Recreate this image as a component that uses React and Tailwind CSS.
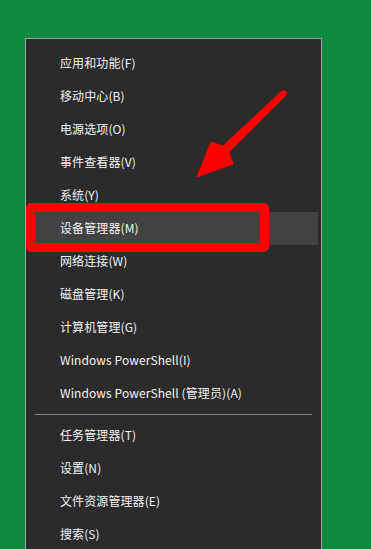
import React from "react";

const top = [
  "应用和功能(F)",
  "移动中心(B)",
  "电源选项(O)",
  "事件查看器(V)",
  "系统(Y)",
  "设备管理器(M)",
  "网络连接(W)",
  "磁盘管理(K)",
  "计算机管理(G)",
  "Windows PowerShell(I)",
  "Windows PowerShell (管理员)(A)",
];
const bottom = ["任务管理器(T)", "设置(N)", "文件资源管理器(E)", "搜索(S)"];

function Item({ label, hover }) {
  return (
    <div
      className={
        "h-[33px] flex items-center pl-[34px] pb-[1px] mr-[3px] text-[12px] tracking-[0.1px] text-[#f2f2f2] " +
        (hover ? "bg-[#424242]" : "")
      }
    >
      {label}
    </div>
  );
}

export default function App() {
  return (
    <div
      className="relative w-[371px] h-[549px] overflow-hidden bg-[#10893e] pt-[38px] pl-[25px]"
      style={{ fontFamily: '"Noto Sans CJK SC", "Noto Sans", sans-serif' }}
    >
      <div className="w-[297px] h-[530px] border border-[#9aa59f] border-b-0 bg-[#2b2b2b] pt-[8px]">
        {top.map((t) => (
          <Item key={t} label={t} hover={t === "设备管理器(M)"} />
        ))}
        <div className="mt-[4px] mb-[4px] ml-[9px] w-[277px] h-px bg-[#7d7d7d]" />
        {bottom.map((t) => (
          <Item key={t} label={t} />
        ))}
      </div>

      {/* red highlight box */}
      <div className="absolute left-[26px] top-[203px] w-[243px] h-[49px] border-[9px] border-[#fe0000] rounded-[5px]" />

      {/* red arrow */}
      <svg
        className="absolute left-0 top-0"
        width="371"
        height="549"
        viewBox="0 0 371 549"
      >
        <polygon
          points="282,91 223,146 211,142 197,177 233,164 229,152 286,95"
          fill="#fe0000"
          stroke="#fe0000"
          strokeWidth="1"
          strokeLinejoin="round"
        />
        <circle cx="284" cy="93" r="2.8" fill="#fe0000" />
      </svg>
    </div>
  );
}
